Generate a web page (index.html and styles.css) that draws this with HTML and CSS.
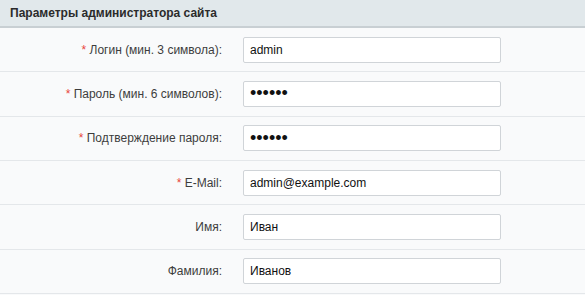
FILE: index.html
```html
<!doctype html>
<html>
<head>
<title>Параметры администратора сайта</title>
<link rel="stylesheet" href="styles.css">
</head>
<body>
    <div class="section">
        <div class="section-title">Параметры администратора сайта</div>
        <div class="field">
            <label class="field-label" for="login"><span class="req">*</span> Логин (мин. 3 символа):</label>
            <input class="field-input" type="text" id="login" value="admin">
        </div>
        <div class="field">
            <label class="field-label" for="password"><span class="req">*</span> Пароль (мин. 6 символов):</label>
            <input class="field-input field-password" type="password" id="password" value="123456">
        </div>
        <div class="field">
            <label class="field-label" for="confirm"><span class="req">*</span> Подтверждение пароля:</label>
            <input class="field-input field-password" type="password" id="confirm" value="123456">
        </div>
        <div class="field">
            <label class="field-label" for="email"><span class="req">*</span> E-Mail:</label>
            <input class="field-input" type="text" id="email" value="admin@example.com">
        </div>
        <div class="field">
            <label class="field-label" for="name">Имя:</label>
            <input class="field-input" type="text" id="name" value="Иван">
        </div>
        <div class="field">
            <label class="field-label" for="lastname">Фамилия:</label>
            <input class="field-input" type="text" id="lastname" value="Иванов">
        </div>
    </div>
</body>
</html>
```

FILE: styles.css
```css
html
{
    background:#f9fafb;
}
body
{
    margin:0;
    font-family:"Liberation Sans", Arial, sans-serif;
    font-size:12px;
    color:#3a3a3a;
}
.section-title
{
    box-sizing:border-box;
    height:28px;
    line-height:26px;
    padding-left:10px;
    background:#e1e8eb;
    border-bottom:2px solid #c8cfd3;
    font-weight:bold;
    font-size:12px;
    color:#2b2b2b;
}
.field
{
    display:grid;
    grid-template-columns:222px 258px;
    column-gap:21px;
    align-items:center;
    height:44.33px;
    box-sizing:border-box;
    border-bottom:1px solid #e4e7ea;
}
.field-label
{
    text-align:right;
    color:#3d3d3d;
}
.req
{
    color:#e8463c;
}
.field-input
{
    box-sizing:border-box;
    height:26px;
    margin:0;
    padding:0 6px;
    border:1px solid #d0d4d8;
    border-radius:2px;
    background:#fff;
    font-family:"Liberation Sans", Arial, sans-serif;
    font-size:12px;
    color:#111;
    outline:none;
}
.field-password
{
    font-size:18px;
}
```
